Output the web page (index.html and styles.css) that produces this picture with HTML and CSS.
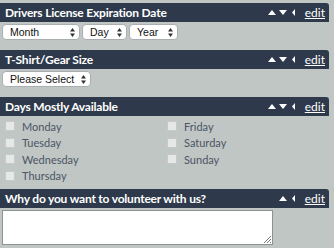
FILE: index.html
```html
<!DOCTYPE html>
<html>
<head>
<meta charset="utf-8">
<link rel="stylesheet" href="styles.css">
</head>
<body>
<div class="form">
  <div class="field">
    <div class="bar">
      <span class="title">Drivers License Expiration Date</span>
      <span class="tools">
        <svg class="ic" width="8" height="5" viewBox="0 0 8 5"><path d="M0 5L4 0L8 5Z" fill="#fff"/></svg>
        <svg class="ic" width="8" height="5" viewBox="0 0 8 5"><path d="M0 0L8 0L4 5Z" fill="#fff"/></svg>
        <svg class="ic lt" width="3" height="7" viewBox="0 0 3 7"><path d="M3 0L3 7L0 3.5Z" fill="#fff"/></svg>
        <a class="edit">edit</a>
      </span>
    </div>
    <div class="row">
      <div class="sel w-month">Month<svg class="arr" width="5" height="9" viewBox="0 0 5 9"><path d="M0 3.5L2.5 0L5 3.5ZM0 5.5L5 5.5L2.5 9Z" fill="#333"/></svg></div>
      <div class="sel w-day">Day<svg class="arr" width="5" height="9" viewBox="0 0 5 9"><path d="M0 3.5L2.5 0L5 3.5ZM0 5.5L5 5.5L2.5 9Z" fill="#333"/></svg></div>
      <div class="sel w-year">Year<svg class="arr" width="5" height="9" viewBox="0 0 5 9"><path d="M0 3.5L2.5 0L5 3.5ZM0 5.5L5 5.5L2.5 9Z" fill="#333"/></svg></div>
    </div>
  </div>
  <div class="field">
    <div class="bar">
      <span class="title">T-Shirt/Gear Size</span>
      <span class="tools">
        <svg class="ic" width="8" height="5" viewBox="0 0 8 5"><path d="M0 5L4 0L8 5Z" fill="#fff"/></svg>
        <svg class="ic" width="8" height="5" viewBox="0 0 8 5"><path d="M0 0L8 0L4 5Z" fill="#fff"/></svg>
        <svg class="ic lt" width="3" height="7" viewBox="0 0 3 7"><path d="M3 0L3 7L0 3.5Z" fill="#fff"/></svg>
        <a class="edit">edit</a>
      </span>
    </div>
    <div class="row">
      <div class="sel w-please">Please Select<svg class="arr" width="5" height="9" viewBox="0 0 5 9"><path d="M0 3.5L2.5 0L5 3.5ZM0 5.5L5 5.5L2.5 9Z" fill="#333"/></svg></div>
    </div>
  </div>
  <div class="field days">
    <div class="bar">
      <span class="title">Days Mostly Available</span>
      <span class="tools">
        <svg class="ic" width="8" height="5" viewBox="0 0 8 5"><path d="M0 5L4 0L8 5Z" fill="#fff"/></svg>
        <svg class="ic" width="8" height="5" viewBox="0 0 8 5"><path d="M0 0L8 0L4 5Z" fill="#fff"/></svg>
        <svg class="ic lt" width="3" height="7" viewBox="0 0 3 7"><path d="M3 0L3 7L0 3.5Z" fill="#fff"/></svg>
        <a class="edit">edit</a>
      </span>
    </div>
    <div class="checks">
      <div class="col">
        <label class="chk"><span class="box"></span>Monday</label>
        <label class="chk"><span class="box"></span>Tuesday</label>
        <label class="chk"><span class="box"></span>Wednesday</label>
        <label class="chk"><span class="box"></span>Thursday</label>
      </div>
      <div class="col">
        <label class="chk"><span class="box"></span>Friday</label>
        <label class="chk"><span class="box"></span>Saturday</label>
        <label class="chk"><span class="box"></span>Sunday</label>
      </div>
    </div>
  </div>
  <div class="field">
    <div class="bar">
      <span class="title">Why do you want to volunteer with us?</span>
      <span class="tools">
        <svg class="ic" width="8" height="5" viewBox="0 0 8 5"><path d="M0 5L4 0L8 5Z" fill="#fff"/></svg>
        <svg class="ic lt" width="3" height="7" viewBox="0 0 3 7"><path d="M3 0L3 7L0 3.5Z" fill="#fff"/></svg>
        <a class="edit">edit</a>
      </span>
    </div>
    <div class="ta">
      <svg class="grip" width="8" height="8" viewBox="0 0 8 8"><path d="M8 1L1 8M8 4L4 8M8 7L7 8" stroke="#777" stroke-width="1"/></svg>
    </div>
  </div>
</div>
</body>
</html>
```
FILE: styles.css
```css
html, body {
  margin: 0;
  padding: 0;
  background: #bfc6c3;
}
body {
  width: 334px;
  height: 248px;
  overflow: hidden;
  font-family: "Lato", "Open Sans", sans-serif;
}
.form {
  padding: 3px 5px 0 0;
  display: flex;
  flex-direction: column;
}
.field {
  margin-bottom: 10px;
}
.field.days {
  margin-bottom: 5px;
}
.bar {
  height: 19px;
  background: #2e3a4b;
  border-radius: 0 3px 0 0;
  display: flex;
  align-items: center;
  justify-content: space-between;
  padding: 0 4px 0 5px;
  color: #fff;
}
.title {
  font-weight: 700;
  font-size: 12px;
  letter-spacing: -0.2px;
}
.tools {
  display: flex;
  align-items: center;
  gap: 3px;
}
.ic {
  display: block;
}
.ic.lt {
  margin-left: 2px;
}
.edit {
  margin-left: 7px;
  color: #fff;
  text-decoration: underline;
  font-size: 12px;
}
.row {
  display: flex;
  gap: 2px;
  padding: 2px 0 0 2px;
}
.sel {
  height: 16px;
  box-sizing: border-box;
  background: #fff;
  border: 1px solid #a9aeb0;
  border-radius: 4px;
  font-family: "Liberation Sans", sans-serif;
  font-size: 10.5px;
  line-height: 14px;
  padding-left: 7px;
  color: #111;
  position: relative;
}
.arr {
  position: absolute;
  right: 4px;
  top: 3px;
}
.w-month { width: 78px; }
.w-day { width: 45px; }
.w-year { width: 49px; }
.w-please { width: 89px; }
.checks {
  display: flex;
  padding: 2px 0 0 5px;
}
.col {
  width: 177px;
  display: flex;
  flex-direction: column;
}
.chk {
  display: flex;
  align-items: center;
  height: 16.5px;
  font-size: 11px;
  color: #4d5466;
}
.box {
  width: 8px;
  height: 8px;
  background: #e6e8e8;
  border: 1px solid #c6caca;
  border-radius: 1px;
  margin-right: 7px;
}
.ta {
  margin: 2px 0 0 2px;
  width: 271px;
  height: 35px;
  box-sizing: border-box;
  background: #fff;
  border: 1px solid #8e9294;
  position: relative;
}
.grip {
  position: absolute;
  right: 1px;
  bottom: 1px;
}
```
